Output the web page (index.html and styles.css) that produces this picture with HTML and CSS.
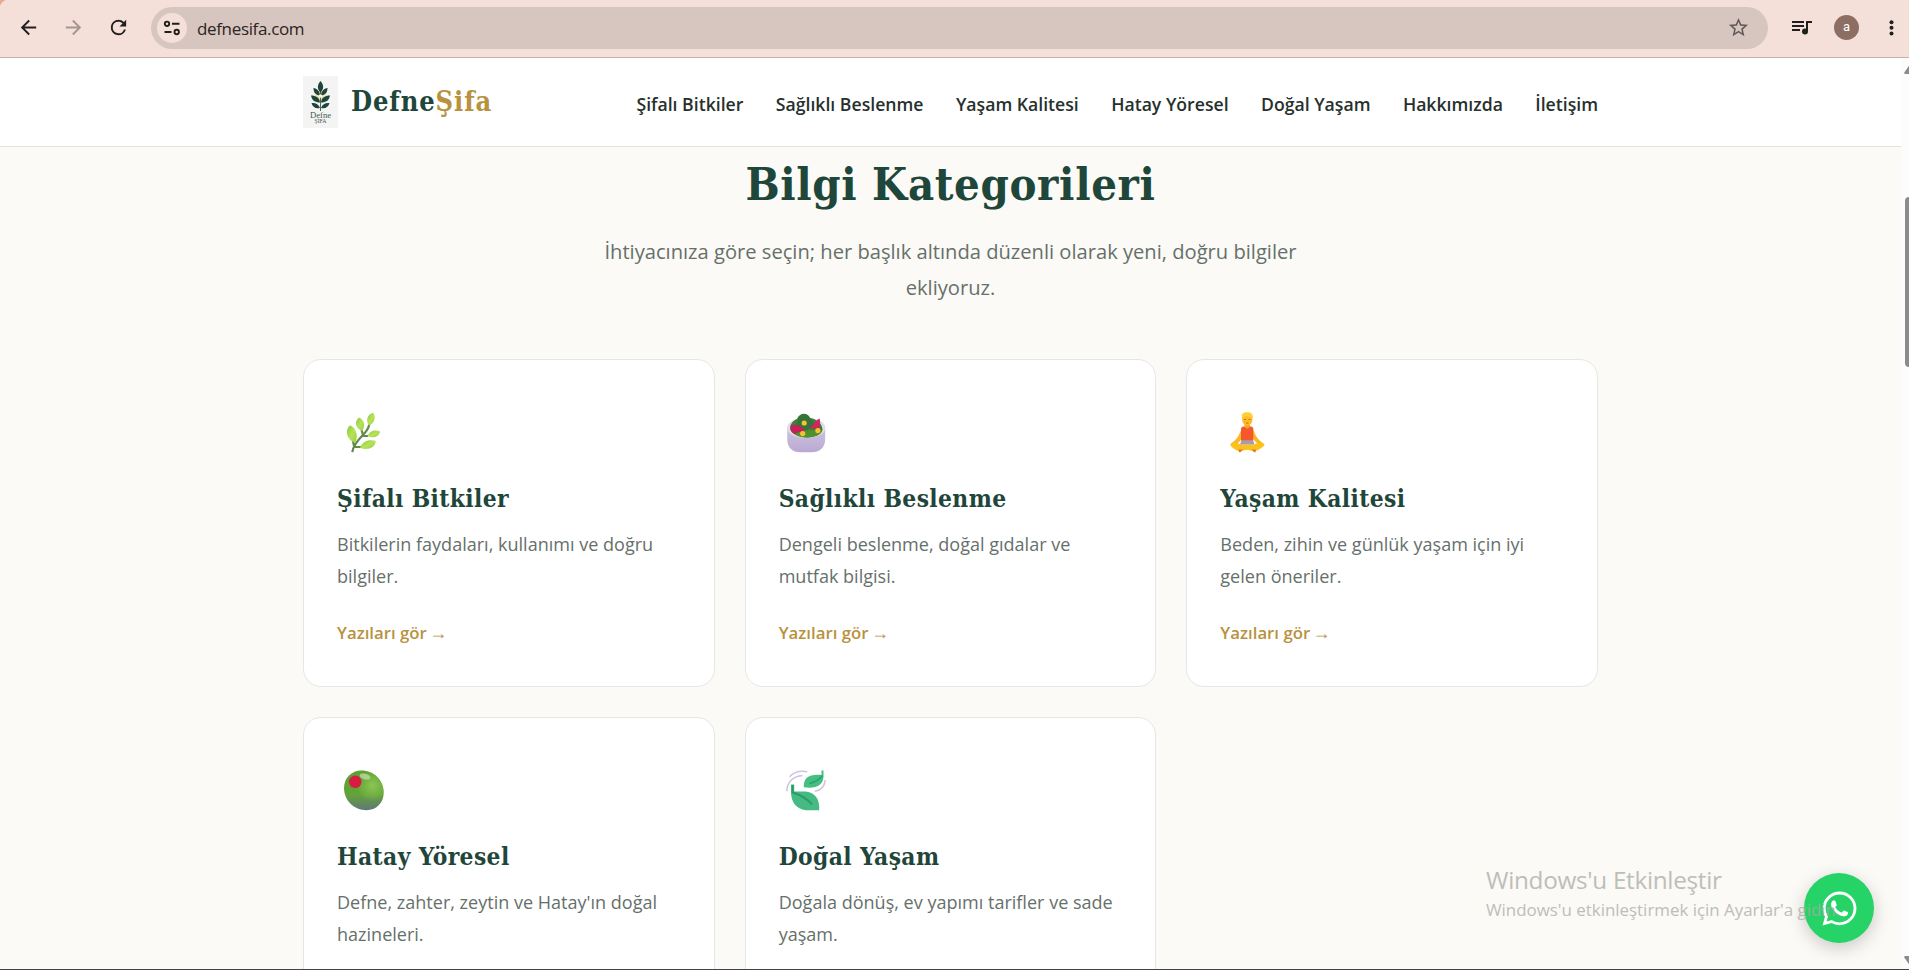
FILE: index.html
```html
<!DOCTYPE html>
<html lang="tr">
<head>
    <meta charset="UTF-8">
    <meta name="viewport" content="width=device-width, initial-scale=1.0">
    <title>DefneŞifa</title>
    <link rel="stylesheet" href="styles.css">
</head>
<body>
    <div class="toolbar">
        <svg class="tool-icon" viewBox="0 0 24 24"><path d="M20 11H7.83l5.59-5.59L12 4l-8 8 8 8 1.41-1.41L7.83 13H20z"/></svg>
        <svg class="tool-icon forward" viewBox="0 0 24 24"><path d="M12 4l-1.41 1.41L16.17 11H4v2h12.17l-5.58 5.59L12 20l8-8z"/></svg>
        <svg class="tool-icon" viewBox="0 0 24 24"><path d="M17.65 6.35A7.95 7.95 0 0 0 12 4a8 8 0 1 0 7.73 10h-2.08A6 6 0 1 1 12 6c1.66 0 3.14.69 4.22 1.78L13 11h7V4z"/></svg>
        <div class="address">
            <span class="site-info">
                <svg width="18" height="18" viewBox="0 0 18 18" fill="none" stroke="#1f1f1f" stroke-width="1.9">
                    <circle cx="4" cy="4.8" r="2.2"/><path d="M9 4.800H16.500M1.500 13H8.500"/><circle cx="13.700" cy="13" r="2.200"/>
                </svg>
            </span>
            <span class="url">defnesifa.com</span>
            <svg class="star" viewBox="0 0 24 24"><path d="M22 9.24l-7.19-.62L12 2 9.19 8.63 2 9.24l5.46 4.73L5.82 21 12 17.27 18.18 21l-1.63-7.03zM12 15.4l-3.76 2.27 1-4.28-3.32-2.88 4.38-.38L12 6.1l1.71 4.04 4.38.38-3.32 2.88 1 4.28z"/></svg>
        </div>
        <svg class="media" width="20" height="16" viewBox="0 0 20 16">
            <path d="M0 1h12v2H0zM0 5h12v2H0zM0 9h8v2H0zM14 1h6v2h-4v8h-2z"/><circle cx="13" cy="11.5" r="3"/>
        </svg>
        <span class="avatar">a</span>
        <svg class="menu" width="5" height="16" viewBox="0 0 5 16"><circle cx="2.5" cy="2.2" r="2"/><circle cx="2.5" cy="7.8" r="2"/><circle cx="2.5" cy="13.4" r="2"/></svg>
    </div>

    <div class="window">
        <div class="page">
            <header class="header">
                <div class="container header-inner">
                    <div class="brand">
                        <svg class="brand-logo" width="35" height="52" viewBox="0 0 35 52">
                            <rect width="35" height="52" fill="#f4f4f4"/>
                            <circle cx="17.5" cy="20" r="6" fill="#f3e3bd"/>
                            <g fill="#1d4637">
                                <path d="M17.500 5c3.500 4 3.500 8 0 11.500-3.500-3.500-3.500-7.500 0-11.500z"/>
                                <path d="M17 19.500c0-4-3-7-6.500-7.500 0 4.500 2 7 6.500 7.500zM18 19.500c0-4 3-7 6.500-7.500 0 4.500-2 7-6.500 7.500z"/>
                                <path d="M17 26.500c-.5-5-4-7-9-7 1 5 4 7 9 7zM18 26.500c.5-5 4-7 9-7-1 5-4 7-9 7z"/>
                                <path d="M17 32c-1.500-4-4.500-5.500-8.500-5 1 4 4 6 8.500 5zM18 32c1.500-4 4.500-5.500 8.500-5-1 4-4 6-8.500 5z"/>
                            </g>
                            <path d="M17.500 15v20" stroke="#1d4637" stroke-width=".8"/>
                            <circle cx="17.500" cy="20" r="1.800" fill="#fff6d8"/>
                            <text class="logo-text" x="17.500" y="41.500" font-size="9" textLength="21" lengthAdjust="spacingAndGlyphs">Defne</text>
                            <text class="logo-text" x="17.500" y="47" font-size="7" textLength="12" lengthAdjust="spacingAndGlyphs">ŞİFA</text>
                        </svg>
                        <span class="brand-name">Defne<span class="gold">Şifa</span></span>
                    </div>
                    <nav class="nav">
                        <a>Şifalı Bitkiler</a>
                        <a>Sağlıklı Beslenme</a>
                        <a>Yaşam Kalitesi</a>
                        <a>Hatay Yöresel</a>
                        <a>Doğal Yaşam</a>
                        <a>Hakkımızda</a>
                        <a>İletişim</a>
                    </nav>
                </div>
            </header>

            <main class="container categories">
                <h1>Bilgi Kategorileri</h1>
                <p class="lead">İhtiyacınıza göre seçin; her başlık altında düzenli olarak yeni, doğru bilgiler ekliyoruz.</p>

                <div class="grid">
                    <div class="card">
                        <svg class="card-icon" viewBox="0 0 54 54">
                            <defs>
                                <linearGradient id="leaf" x1="0" y1="0" x2="1" y2="1"><stop offset="0" stop-color="#8fc43c"/><stop offset=".5" stop-color="#b5e258"/><stop offset="1" stop-color="#9fcf49"/></linearGradient>
                            </defs>
                            <path d="M15.300 47.200C16 41 20 36 26.300 29.500 30 26 31.500 23 32.300 19.500M26 30L24.500 25M25 31H31M17 41L16 36M17 42H24" fill="none" stroke="#5f8a4c" stroke-width="2.200"/>
                            <g fill="url(#leaf)">
                                <path d="M13 20.200C19 23 21.500 30 18.500 37.500 10.500 36 7 26 13 20.200z"/>
                                <path d="M22 12.500C27.500 15 28.500 21 25.300 26 19 24 16.500 17 22 12.500z"/>
                                <path d="M36.300 7.800C39.500 13 36.500 19 32 20.500 28.500 16 30 9.500 36.300 7.800z"/>
                                <path d="M43 26.200C42.500 32 36 33.500 30.500 31.300 32.500 26 37.500 24.500 43 26.200z"/>
                                <path d="M38.700 35.800C38.500 43 31 45.500 23 43 25.500 36 31.500 34 38.700 35.800z"/>
                            </g>
                        </svg>
                        <h2>Şifalı Bitkiler</h2>
                        <p>Bitkilerin faydaları, kullanımı ve doğru bilgiler.</p>
                        <a class="more">Yazıları gör <span class="arrow">→</span></a>
                    </div>

                    <div class="card">
                        <svg class="card-icon" viewBox="0 0 54 54">
                            <defs>
                                <linearGradient id="bowl" x1="0" y1="0" x2="0" y2="1"><stop offset="0" stop-color="#d8cee2"/><stop offset="1" stop-color="#b9a9d3"/></linearGradient>
                            </defs>
                            <path d="M8.200 23C8.200 10 46.200 10 46.200 23V34C46.200 43 40 47.200 33 47.200H21C14 47.200 8.200 43 8.200 34z" fill="url(#bowl)"/>
                            <path d="M8.200 23C8.200 9.500 46.200 9.500 46.200 23 46.200 36 8.200 36 8.200 23z" fill="#e3dcea"/>
                            <path d="M11 24C11 18 15 15 18 14 20 8 28 6.500 31 13 37 14 43.500 18 43.500 25 41 35 14 35 11 24z" fill="#3f7f32"/>
                            <path d="M19 14c2-5 9-7 12-1l4 6-7 6-11-4z" fill="#34733a"/>
                            <path d="M12 20C17 19 23 21 26.500 26L16 29C12 27 11 24 12 20z" fill="#c81e5b"/>
                            <path d="M40.500 13.500C42 19 41 23 38 24L29.500 23C34 21.500 36 15.500 40.500 13.500z" fill="#cf2560"/>
                            <path d="M16 29C23 25 33 24 43 26 39 34 22 34 16 29z" fill="#4c922d"/>
                            <g fill="#fbc02d"><circle cx="25.200" cy="18" r="2.600"/><circle cx="23.700" cy="28.600" r="2.600"/><circle cx="38.900" cy="25.600" r="2.600"/></g>
                        </svg>
                        <h2>Sağlıklı Beslenme</h2>
                        <p>Dengeli beslenme, doğal gıdalar ve mutfak bilgisi.</p>
                        <a class="more">Yazıları gör <span class="arrow">→</span></a>
                    </div>

                    <div class="card">
                        <svg class="card-icon" viewBox="0 0 54 54">
                            <path d="M22 23C19.500 29 18 34 11 38.500L13 41C20 38 23 33 24 27zM32.500 23C35 29 36.500 34 43.500 38.500L42 41C35 38 31.500 33 31 27z" fill="#fbb81e"/>
                            <path d="M10 39.500C13 36.500 17 38 21 39.500H34C38 38 42 36.500 44.700 39.500 43 42.500 39 45 34 46.500 29 44.500 25 44.500 20 46.500 15 45 11.500 42.500 10 39.500z" fill="#fcc21b"/>
                            <path d="M18.500 44.500h4.500l-2.500 2.800h-1.500zM31.500 44.500h4.500l-.5 2.800h-1.500z" fill="#df7b2a"/>
                            <path d="M21.500 35h11.500l1.500 4.500H20z" fill="#a79ca8"/>
                            <path d="M24.500 18h5.500v4l-1 4h-3.500l-1-4z" fill="#f2a51e"/>
                            <path d="M21 23.500Q21.500 21.500 24 21.300 27.200 26 30.500 21.300 33 21.500 33.300 23.500V35.200H21z" fill="#f4582c"/>
                            <ellipse cx="27.300" cy="14.300" rx="5.200" ry="6.400" fill="#fdbb28"/>
                            <path d="M22 13C21 8.500 24 7 27 7.200 31 7 33.500 9 32.500 13.500 31 11 25 10 22 13z" fill="#ffcf35"/>
                            <path d="M24 14.500h2M28.500 14.500h2M26 18h2.500" stroke="#b86b1b" stroke-width=".9"/>
                        </svg>
                        <h2>Yaşam Kalitesi</h2>
                        <p>Beden, zihin ve günlük yaşam için iyi gelen öneriler.</p>
                        <a class="more">Yazıları gör <span class="arrow">→</span></a>
                    </div>

                    <div class="card">
                        <svg class="card-icon" viewBox="0 0 54 54">
                            <defs>
                                <linearGradient id="olive" x1="0" y1="0" x2="0" y2="1"><stop offset="0" stop-color="#5da130"/><stop offset=".6" stop-color="#64a337"/><stop offset="1" stop-color="#61777a"/></linearGradient>
                                <radialGradient id="shine" cx=".72" cy=".38" r=".4"><stop offset="0" stop-color="#8bc655"/><stop offset="1" stop-color="#8bc655" stop-opacity="0"/></radialGradient>
                            </defs>
                            <path d="M24.500 7.500C37 7.500 46.700 17 46.700 30 46.700 40 39 47.200 29.500 47.200 17 47.200 7 37.500 7 25 7 15 14.500 7.500 24.500 7.500z" fill="url(#olive)"/>
                            <path d="M24.500 7.500C37 7.500 46.700 17 46.700 30 46.700 40 39 47.200 29.500 47.200 17 47.200 7 37.500 7 25 7 15 14.500 7.500 24.500 7.500z" fill="url(#shine)"/>
                            <ellipse cx="28" cy="13.500" rx="5.500" ry="2.800" fill="#c5e3a8" opacity=".7" transform="rotate(15 28 13.500)"/>
                            <circle cx="18.300" cy="18.800" r="6.200" fill="#d81b43"/>
                        </svg>
                        <h2>Hatay Yöresel</h2>
                        <p>Defne, zahter, zeytin ve Hatay'ın doğal hazineleri.</p>
                    </div>

                    <div class="card">
                        <svg class="card-icon" viewBox="0 0 54 54">
                            <path d="M7.800 28.200C8 19.500 14 13 23.500 12.500M10.500 13.800C15 9 21 7.500 28.200 8.800M35.800 28.200C42 27.500 45.500 23.500 46.200 17.200" fill="none" stroke="#cfc3dd" stroke-width="1.500"/>
                            <path d="M24.800 24.200C24.500 15 29.500 11 42.500 12V7.500H44.500V14C44 23 36 26 24.800 24.200z" fill="#43bf81"/>
                            <path d="M30.500 20.500C35 19.500 40 17 43.500 12.500" fill="none" stroke="#2d9e6b" stroke-width="1.400"/>
                            <path d="M12 21.500h3.200v7H27C36 29.500 41 36 40.200 47.200H27C17 46 12 39 12 29z" fill="#45bb83"/>
                            <path d="M13.700 22V29.500C20 31.500 28 35.500 33 41.500" fill="none" stroke="#2b9b68" stroke-width="2"/>
                        </svg>
                        <h2>Doğal Yaşam</h2>
                        <p>Doğala dönüş, ev yapımı tarifler ve sade yaşam.</p>
                    </div>
                </div>
            </main>

            <a class="whatsapp">
                <svg width="37" height="37" viewBox="0 0 24 24" fill="#fff"><path d="M12.040 1C6 1 1.100 5.900 1.100 11.900c0 1.930.5 3.800 1.460 5.470L1 23l5.800-1.520a10.900 10.900 0 0 0 5.240 1.330C18.100 22.800 23 17.900 23 11.900S18.100 1 12.040 1zm0 20a9 9 0 0 1-4.630-1.270l-.33-.2-3.440.9.920-3.350-.22-.34A9 9 0 0 1 3 11.900 9.050 9.050 0 1 1 12.040 21zM17 14.200c-.27-.14-1.600-.8-1.860-.88-.25-.1-.43-.14-.6.13-.2.270-.7.880-.87 1.060-.16.180-.32.200-.6.070-1.600-.8-2.660-1.430-3.700-3.250-.28-.48.28-.450.8-1.500.1-.18.050-.33-.02-.47-.07-.130-.6-1.480-.84-2.020-.22-.53-.45-.46-.61-.47h-.53c-.18 0-.47.07-.72.34-.25.280-.95.930-.95 2.270s.97 2.630 1.100 2.810c.14.180 1.920 2.940 4.660 4.120 1.730.75 2.400.81 3.270.68.530-.080 1.620-.66 1.850-1.300.23-.65.230-1.200.160-1.310-.07-.12-.25-.19-.52-.330z"/></svg>
            </a>
        </div>

        <div class="scrollbar">
            <svg class="scroll-arrow" width="10" height="9" viewBox="0 0 10 9"><path d="M5.500 0L11 8Q11 9 10 9H1Q0 9 .3 7.500z"/></svg>
            <div class="thumb"></div>
            <svg class="scroll-arrow" width="10" height="9" viewBox="0 0 10 9"><path d="M5.500 9L11 1Q11 0 10 0H1Q0 0 .3 1.500z"/></svg>
        </div>
    </div>

    <div class="watermark">
        <div class="watermark-title">Windows'u Etkinleştir</div>
        <div class="watermark-text">Windows'u etkinleştirmek için Ayarlar'a gidin.</div>
    </div>
</body>
</html>
```
FILE: styles.css
```css
* {
    box-sizing: border-box;
}
body {
    margin: 0;
    height: 970px;
    display: flex;
    flex-direction: column;
    overflow: hidden;
    position: relative;
    font-family: 'Segoe UI', 'Open Sans', sans-serif;
    background-color: #fbfaf6;
    border-bottom: 1px solid #444;
}

/* browser toolbar */
.toolbar {
    flex: none;
    height: 58px;
    padding: 0 15px 2px 17px;
    display: flex;
    align-items: center;
    background: radial-gradient(circle at 9px 9px, #f5e0d9 9px, transparent 10px), linear-gradient(135deg, #e9a795 6px, #f5e0d9 7px);
    border-bottom: 1px solid #c8b0aa;
}
.tool-icon {
    width: 23px;
    height: 23px;
    margin-right: 22px;
    fill: #1f1f1f;
}
.forward {
    fill: #a39591;
}
.address {
    flex: 1;
    height: 42px;
    margin-left: -1px;
    padding: 0 18px 0 6px;
    display: flex;
    align-items: center;
    background-color: #d7c6bf;
    border-radius: 21px;
}
.site-info {
    width: 30px;
    height: 30px;
    display: flex;
    align-items: center;
    justify-content: center;
    border-radius: 50%;
    background-color: #f5e0d9;
}
.url {
    flex: 1;
    margin-left: 10px;
    padding-top: 1px;
    font-size: 17px;
    letter-spacing: -0.35px;
    color: #2a2423;
}
.star {
    width: 23px;
    height: 23px;
    fill: #5f5a59;
}
.media {
    margin-left: 24px;
    fill: #1f1f1f;
}
.avatar {
    width: 25px;
    height: 25px;
    margin: 0 30px 0 22px;
    border-radius: 50%;
    background-color: #8d6e63;
    color: white;
    font: 13px/24px Roboto, sans-serif;
    text-align: center;
}
.menu {
    fill: #1f1f1f;
}

/* page */
.window {
    flex: 1;
    min-height: 0;
    display: flex;
}
.page {
    flex: 1;
    position: relative;
    overflow: hidden;
}
.container {
    width: 1295px;
    margin: 0 auto;
}
.header {
    height: 89px;
    background-color: white;
    border-bottom: 1px solid #e0e7e2;
}
.header-inner {
    height: 88px;
    display: flex;
    align-items: center;
    justify-content: space-between;
}
.brand {
    display: flex;
    align-items: center;
    gap: 13px;
}
.logo-text {
    font-family: 'Liberation Serif', serif;
    fill: #3c5a4e;
    text-anchor: middle;
}
.brand-name, h1, h2 {
    font-family: Georgia, 'DejaVu Serif Condensed', 'DejaVu Serif', serif;
    font-stretch: condensed;
    font-weight: bold;
    color: #1f463a;
}
.brand-name {
    font-size: 27px;
    line-height: 36px;
    letter-spacing: 0.9px;
}
.gold {
    color: #b8923f;
}
.nav {
    display: flex;
    gap: 32.4px;
    padding-top: 4px;
    font-weight: 600;
    font-size: 17.65px;
    line-height: 28px;
    color: #26302c;
}
.categories {
    padding-top: 8px;
}
h1, h2 {
    margin: 0;
}
h1 {
    font-size: 45px;
    line-height: 60px;
    letter-spacing: 0.65px;
    text-align: center;
}
.lead {
    width: 730px;
    margin: 18px auto 54px;
    font-size: 20.15px;
    line-height: 36px;
    text-align: center;
    color: #66706a;
}
.grid {
    display: grid;
    grid-template-columns: repeat(3, 1fr);
    grid-auto-rows: 328px;
    gap: 30px;
}
.card {
    padding: 33px;
    background-color: white;
    border: 1px solid #e4e8e4;
    border-radius: 18px;
}
.card-icon {
    display: block;
    width: 54px;
    height: 54px;
    margin: 12px 0 22px;
}
.card h2 {
    font-size: 24.3px;
    line-height: 36px;
    letter-spacing: 0.4px;
}
.card p {
    margin: 11px 0 27px;
    font-size: 18.05px;
    line-height: 32px;
    color: #66706a;
}
.more {
    display: block;
    font-weight: 600;
    font-size: 16.8px;
    line-height: 28px;
    color: #b8923f;
}
.arrow {
    margin-left: -2px;
    font-family: 'Liberation Sans', sans-serif;
    font-size: 18px;
    line-height: 1;
    font-weight: normal;
}
.whatsapp {
    position: absolute;
    right: 27px;
    bottom: 26px;
    width: 70px;
    height: 70px;
    display: flex;
    align-items: center;
    justify-content: center;
    border-radius: 50%;
    background-color: #25d366;
    box-shadow: 0 5px 18px rgba(0,0,0,0.2);
}

/* scrollbar */
.scrollbar {
    width: 8px;
    padding: 7px 0 4px 3px;
    display: flex;
    flex-direction: column;
    overflow: hidden;
    background-color: #fcfcfc;
}
.scroll-arrow {
    flex: none;
    fill: #8b8b8b;
}
.thumb {
    width: 10px;
    height: 170px;
    margin: 123px 0 auto 1px;
    border-radius: 4px;
    background-color: #8b8b8b;
}

/* activation notice over the desktop */
.watermark {
    position: absolute;
    left: 1486px;
    top: 862px;
    color: #a9aaa8;
    opacity: 0.75;
    white-space: nowrap;
}
.watermark-title {
    font-size: 24.3px;
    line-height: 35px;
    letter-spacing: -0.3px;
}
.watermark-text {
    font-size: 16.9px;
    line-height: 26px;
}
```
